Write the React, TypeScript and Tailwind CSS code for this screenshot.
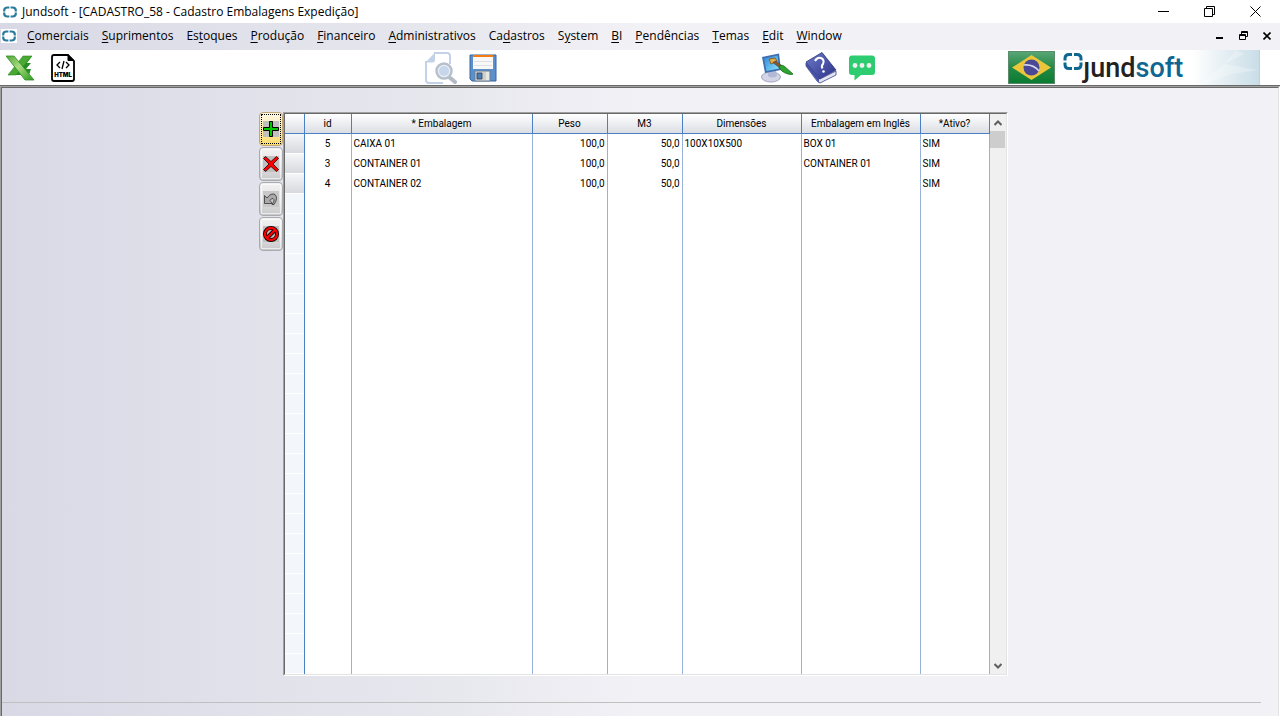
import React from "react";

type MenuEntry = { before: string; key: string; after: string };

const menus: MenuEntry[] = [
  { before: "", key: "C", after: "omerciais" },
  { before: "", key: "S", after: "uprimentos" },
  { before: "Es", key: "t", after: "oques" },
  { before: "", key: "P", after: "rodução" },
  { before: "", key: "F", after: "inanceiro" },
  { before: "", key: "A", after: "dministrativos" },
  { before: "Ca", key: "d", after: "astros" },
  { before: "S", key: "y", after: "stem" },
  { before: "", key: "B", after: "I" },
  { before: "", key: "P", after: "endências" },
  { before: "", key: "T", after: "emas" },
  { before: "", key: "E", after: "dit" },
  { before: "", key: "W", after: "indow" },
];

const columns = [
  { title: "id", width: "w-[47px]", align: "text-center" },
  { title: "* Embalagem", width: "w-[181px]", align: "text-left" },
  { title: "Peso", width: "w-[75px]", align: "text-right" },
  { title: "M3", width: "w-[75px]", align: "text-right" },
  { title: "Dimensões", width: "w-[119px]", align: "text-left" },
  { title: "Embalagem em Inglês", width: "w-[119px]", align: "text-left" },
  { title: "*Ativo?", width: "w-[69px]", align: "text-left" },
];

const rows = [
  ["5", "CAIXA 01", "100,0", "50,0", "100X10X500", "BOX 01", "SIM"],
  ["3", "CONTAINER 01", "100,0", "50,0", "", "CONTAINER 01", "SIM"],
  ["4", "CONTAINER 02", "100,0", "50,0", "", "", "SIM"],
];

const emptyRows = Array.from({ length: 24 }, (_, i) => i);

const AppMark: React.FC = () => (
  <svg width="16" height="14" viewBox="0 0 16 14" fill="none" stroke="#2a7a9e" strokeWidth="2.2">
    <path d="M7.400 2.500H5.500Q2.200 2.500 2.200 5.500V6.400M8.600 2.500H10.500Q13.800 2.500 13.800 5.500V6.400M2.200 7.600V8.500Q2.200 11.500 5.500 11.500H7.400M13.800 7.600V8.500Q13.800 11.500 10.500 11.500H8.600" />
  </svg>
);

const ExcelIcon: React.FC = () => (
  <svg width="28" height="26" viewBox="0 0 28 26">
    <defs>
      <linearGradient id="xl" x1="0" y1="0" x2="1" y2="1">
        <stop offset="0" stopColor="#4fa53a" />
        <stop offset="0.45" stopColor="#a9dc80" />
        <stop offset="1" stopColor="#2a9a1c" />
      </linearGradient>
    </defs>
    <path d="M18 1H26L21 8H25L20 14H25L23 20H2L12 10Z" fill="#2a8c26" />
    <path d="M17 1H26L10 20H2Z" fill="#4aa834" stroke="#2c8a24" strokeWidth="0.6" />
    <path d="M0 1H8L28 25H19Z" fill="url(#xl)" stroke="#2f8f24" strokeWidth="0.8" />
  </svg>
);

const HtmlIcon: React.FC = () => (
  <svg width="24" height="28" viewBox="0 0 24 28" fill="none" stroke="#000">
    <path d="M3 1H17L23 7V25Q23 27 21 27H3Q1 27 1 25V3Q1 1 3 1Z" strokeWidth="1.8" />
    <path d="M17 1V6.500H23Z" fill="#000" strokeWidth="1" />
    <path d="M9 8L6 11L9 14M15 8L18 11L15 14M13 7L11 15" strokeWidth="1.3" />
    <text
      x="12"
      y="23"
      textAnchor="middle"
      fill="#000"
      stroke="none"
      fontSize="6"
      fontWeight="900"
      fontFamily="Inter, sans-serif"
    >
      HTML
    </text>
  </svg>
);

const PreviewIcon: React.FC = () => (
  <svg width="32" height="32" viewBox="0 0 32 32" fill="none">
    <path d="M9 1H22Q25 1 25 4V12M1 9V28Q1 31 4 31H18" stroke="#c3d2e6" strokeWidth="2" />
    <path d="M10 0.500V8Q10 10.500 8 10.500H0.500Z" fill="#c3d2e6" />
    <path d="M24 25L30 30" stroke="#b2bac4" strokeWidth="4" strokeLinecap="round" />
    <circle cx="19" cy="19" r="7.500" fill="#e6edf6" stroke="#b7bfca" strokeWidth="2.400" />
    <circle cx="19" cy="19" r="5" fill="#c7d6ea" />
  </svg>
);

const SaveIcon: React.FC = () => (
  <svg width="28" height="28" viewBox="0 0 28 28">
    <path d="M1 1H27V27H3L1 25Z" fill="#5a90cc" stroke="#3765a0" />
    <path d="M4 1H24V15H4Z" fill="#f8f8f8" />
    <path d="M4 1H24V3H4Z" fill="#f57c12" />
    <path d="M5 7.500H23M5 11.500H23" stroke="#e0e0e0" />
    <path d="M6 17H21V27H6Z" fill="#cfd0cb" stroke="#6d7f93" strokeWidth="0.8" />
    <path d="M8 19H13V25H8Z" fill="#4b7eb9" stroke="#30405a" strokeWidth="0.8" />
    <path d="M17 18H20V26H17Z" fill="#e9e9e4" />
  </svg>
);

const ThemeIcon: React.FC = () => (
  <svg width="32" height="30" viewBox="0 0 32 30">
    <defs>
      <linearGradient id="scr" x1="0" y1="0" x2="1" y2="1">
        <stop offset="0" stopColor="#2f86d8" />
        <stop offset="1" stopColor="#8be3fb" />
      </linearGradient>
    </defs>
    <ellipse cx="10" cy="24" rx="9.500" ry="5" fill="#d3d5e6" stroke="#8f92b0" strokeWidth="0.8" />
    <path d="M7 18L15 17L16 23Q11 26 7 23Z" fill="#b3b8d4" />
    <path d="M1 4L18 0.500L20 17L4 20Z" fill="#3f6fae" />
    <path d="M3 5.500L16.500 2.500L18 15.500L5.500 18Z" fill="url(#scr)" />
    <path d="M8 6L14 5L16 8L10 11Z" fill="#e0ad4a" stroke="#7c4f13" strokeWidth="0.8" />
    <path d="M12 9.500L15 8L21 13L19 15Z" fill="#8a5a2a" stroke="#444" strokeWidth="0.7" />
    <path d="M18 14Q19 11 23 13L32 21Q31 22 27 21Q20 19 18 14Z" fill="#2fa32f" stroke="#14691a" strokeWidth="0.8" />
  </svg>
);

const BookIcon: React.FC = () => (
  <svg width="32" height="32" viewBox="0 0 32 32">
    <defs>
      <linearGradient id="bk" x1="0" y1="0" x2="1" y2="1">
        <stop offset="0" stopColor="#6d7bc6" />
        <stop offset="1" stopColor="#2b318a" />
      </linearGradient>
    </defs>
    <path d="M1 11L15 27L31 19V23L15 31L12 29L1 14Z" fill="#e4e6f2" stroke="#4b5297" strokeWidth="0.9" />
    <path d="M1 10L17 0.500L31 18L14 27Z" fill="url(#bk)" stroke="#2d3482" strokeWidth="0.8" />
    <path d="M1 10L14 27V31L1 14Z" fill="#4450a6" />
    <path d="M10 9Q12 5 16 6Q20 8 18 12Q16 14 17.500 16.500" fill="none" stroke="#fff" strokeWidth="2" />
    <circle cx="18.500" cy="19.500" r="1.300" fill="#fff" />
  </svg>
);

const ChatIcon: React.FC = () => (
  <svg width="26" height="26" viewBox="0 0 26 26">
    <path d="M3 0.500H23Q26 0.500 26 3.500V17Q26 20 23 20H12L5.500 25.500V20H3Q0 20 0 17V3.500Q0 0.500 3 0.500Z" fill="#2ecc71" />
    <g fill="#f0f0f0">
      <circle cx="6" cy="10.500" r="2.400" />
      <circle cx="13" cy="10.500" r="2.400" />
      <circle cx="20" cy="10.500" r="2.400" />
    </g>
  </svg>
);

const BrazilFlag: React.FC = () => (
  <svg width="47" height="33" viewBox="0 0 47 33">
    <defs>
      <linearGradient id="br" x1="0" y1="0" x2="0" y2="1">
        <stop offset="0" stopColor="#5aa676" />
        <stop offset="0.5" stopColor="#238a45" />
        <stop offset="1" stopColor="#0b7a30" />
      </linearGradient>
    </defs>
    <rect x="0.500" y="0.500" width="46" height="32" fill="url(#br)" stroke="#5c8a6c" />
    <path d="M4 16.500L23.500 4L43 16.500L23.500 29Z" fill="#ecc63a" />
    <circle cx="23.500" cy="16.500" r="8" fill="#4b4897" />
    <path d="M16 14Q25 13 31 20" fill="none" stroke="#d7d9e8" strokeWidth="1.500" />
  </svg>
);

const LogoMark: React.FC = () => (
  <svg width="20" height="19" viewBox="0 0 20 19" fill="none" stroke="#0f6690" strokeWidth="3">
    <path d="M9 2.500H6Q2 2.500 2 6.500V8.500M11 2.500H14Q18 2.500 18 6.500V8.500M2 10.500V12.500Q2 16.500 6 16.500H9M18 10.500V12.500Q18 16.500 14 16.500H11" />
  </svg>
);

const PlusIcon: React.FC = () => (
  <svg width="16" height="16" viewBox="0 0 16 16" className="shrink-0 bg-[#c0c0c0]">
    <path d="M6.500 0.500H9.500V6.500H15.500V9.500H9.500V15.500H6.500V9.500H0.500V6.500H6.500Z" fill="#00c800" stroke="#000" />
  </svg>
);

const DeleteIcon: React.FC = () => (
  <svg width="16" height="16" viewBox="0 0 16 16" className="shrink-0 bg-[#c0c0c0]">
    <path
      d="M2.500 0.500L8 5.500L13.500 0.500L15.500 2.500L10 8L15.500 13.500L13.500 15.500L8 10.500L2.500 15.500L0.500 13.500L6 8L0.500 2.500Z"
      fill="#f00"
      stroke="#200"
      strokeWidth="0.8"
    />
  </svg>
);

const UndoIcon: React.FC = () => (
  <svg width="16" height="16" viewBox="0 0 16 16" className="shrink-0 bg-[#c9c9c9]">
    <path
      d="M1.500 4.500L4 7Q8 1.500 12 3.500Q15.500 7 11 13.500L9 13.500Q12.500 9 10 7.500Q8.500 7 7 9.500L9.500 12.500H1.500Z"
      fill="#aaa"
      stroke="#444"
      strokeWidth="0.9"
    />
  </svg>
);

const CancelIcon: React.FC = () => (
  <svg width="16" height="16" viewBox="0 0 16 16" fill="none" className="shrink-0 bg-[#c0c0c0]">
    <circle cx="8" cy="8" r="6" stroke="#000" strokeWidth="4" />
    <path d="M4 12L12 4" stroke="#000" strokeWidth="4" />
    <circle cx="8" cy="8" r="6" stroke="#f00" strokeWidth="2.400" />
    <path d="M4 12L12 4" stroke="#f00" strokeWidth="2.400" />
  </svg>
);

const tools = [
  { label: "Inserir", icon: <PlusIcon />, active: true },
  { label: "Excluir", icon: <DeleteIcon />, active: false },
  { label: "Desfazer", icon: <UndoIcon />, active: false },
  { label: "Cancelar", icon: <CancelIcon />, active: false },
];

const TitleBar: React.FC = () => (
  <header className="flex h-[23px] items-center bg-white px-0.5">
    <AppMark />
    <h1 className="flex-1 pl-1 text-xs">Jundsoft - [CADASTRO_58 - Cadastro Embalagens Expedição]</h1>
    <button aria-label="Minimizar" className="flex h-5 w-[46px] items-center justify-center">
      <svg width="11" height="11" stroke="#000">
        <path d="M0 5.500H11" />
      </svg>
    </button>
    <button aria-label="Restaurar" className="flex h-5 w-[46px] items-center justify-center">
      <svg width="11" height="11" fill="none" stroke="#000">
        <path d="M0.500 2.500H8.500V10.500H0.500ZM2.500 2.500V0.500H10.500V8.500H8.500" />
      </svg>
    </button>
    <button aria-label="Fechar" className="flex h-5 w-[46px] items-center justify-center">
      <svg width="11" height="11" stroke="#000">
        <path d="M0.500 0.500L10.500 10.500M10.500 0.500L0.500 10.500" />
      </svg>
    </button>
  </header>
);

const MenuBar: React.FC = () => (
  <nav className="flex h-[27px] items-center bg-linear-to-r from-[#d9d9e6] via-[#e7e8ee] via-35% to-[#f2f1f6] to-50% px-px pb-0.5">
    <span className="bg-white">
      <AppMark />
    </span>
    <div className="flex flex-1 gap-[13px] pl-2.5 text-xs">
      {menus.map((m) => (
        <button key={m.before + m.key + m.after}>
          {m.before}
          <span className="underline underline-offset-2">{m.key}</span>
          {m.after}
        </button>
      ))}
    </div>
    <button aria-label="Minimizar janela" className="flex h-5 w-6 items-center justify-center">
      <svg width="8" height="9" stroke="#000" strokeWidth="2">
        <path d="M1 7H8" />
      </svg>
    </button>
    <button aria-label="Restaurar janela" className="flex h-5 w-6 items-center justify-center">
      <svg width="9" height="9" fill="none" stroke="#000">
        <path d="M0.500 3.500H6.500V8.500H0.500ZM0 4.500H7M2.500 3V0.500H8.500V5.500H7M2 1.500H9" />
      </svg>
    </button>
    <button aria-label="Fechar janela" className="flex h-5 w-6 items-center justify-center">
      <svg width="8" height="8" stroke="#000" strokeWidth="1.600">
        <path d="M0.500 0.500L7.500 7.500M7.500 0.500L0.500 7.500" />
      </svg>
    </button>
  </nav>
);

const Toolbar: React.FC = () => (
  <div className="grid h-9 grid-cols-[425fr_336fr_247fr_272px] grid-rows-[35px] items-center border-b border-[#696969] bg-white">
    <div className="flex items-center gap-[17px] pl-1.5">
      <button aria-label="Exportar Excel">
        <ExcelIcon />
      </button>
      <button aria-label="Exportar HTML">
        <HtmlIcon />
      </button>
    </div>
    <div className="flex items-center gap-3">
      <button aria-label="Visualizar">
        <PreviewIcon />
      </button>
      <button aria-label="Salvar">
        <SaveIcon />
      </button>
    </div>
    <div className="flex items-center gap-3">
      <button aria-label="Temas">
        <ThemeIcon />
      </button>
      <button aria-label="Ajuda">
        <BookIcon />
      </button>
      <button aria-label="Chat">
        <ChatIcon />
      </button>
    </div>
    <div className="flex h-full items-center">
      <button aria-label="Português">
        <BrazilFlag />
      </button>
      <div className="flex h-full flex-1 pl-2">
        <div className="pt-0.5">
          <LogoMark />
        </div>
        <p className="font-[Roboto,sans-serif] text-[27px] leading-9 font-medium text-[#222]">
          ȷund<span className="text-[#0f6690]">soft</span>
        </p>
      </div>
      <svg width="68" height="35" viewBox="0 0 68 35" className="mr-5 shrink-0">
        <defs>
          <linearGradient id="fade">
            <stop offset="0" stopColor="#fff" />
            <stop offset="1" stopColor="#c8dde7" />
          </linearGradient>
        </defs>
        <rect width="68" height="35" fill="url(#fade)" />
        <path d="M8 35L32 14L66 20L40 24ZM32 14L44 0L52 4Z" fill="#fff" opacity="0.25" />
        <path d="M67.500 0V35" stroke="#c9ced2" />
      </svg>
    </div>
  </div>
);

const PackagingTable: React.FC = () => (
  <div className="border border-t-[#a0a0a0] border-r-white border-b-white border-l-[#a0a0a0]">
    <div className="flex border border-t-[#696969] border-r-[#e3e3e3] border-b-[#e3e3e3] border-l-[#696969] bg-white">
      <table className="table-fixed border-separate border-spacing-0 font-[Roboto,'Liberation_Sans',sans-serif] text-[10px] leading-4">
        <thead>
          <tr className="h-5 bg-linear-to-b from-white to-[#d9dce1]">
            <th className="w-5 border-r border-b border-[#4a80c4] p-0" />
            {columns.map((c) => (
              <th key={c.title} className={`${c.width} border-r border-b border-[#4a80c4] p-0 text-center font-normal`}>
                {c.title}
              </th>
            ))}
          </tr>
        </thead>
        <tbody>
          {rows.map((row) => (
            <tr key={row[0]} className="h-5">
              <td className="border-r border-[#4a80c4] bg-[linear-gradient(#f4f5f7,#d6d9de_19px,#fff_19px)] p-0" />
              {row.map((cell, i) => (
                <td key={columns[i].title} className={`${columns[i].align} border-r border-[#98b1d8] px-0.5 py-0`}>
                  {cell}
                </td>
              ))}
            </tr>
          ))}
          {emptyRows.map((n) => (
            <tr key={n} className="h-5">
              <td className="border-r border-[#4a80c4] bg-[linear-gradient(#f3f7fc_19px,#fff_19px)] p-0" />
              {columns.map((c) => (
                <td key={c.title} className="border-r border-[#98b1d8] p-0" />
              ))}
            </tr>
          ))}
        </tbody>
      </table>
      {/* Scrollbar */}
      <div className="flex w-4 flex-col items-center bg-[#f0f0f0]">
        <button aria-label="Rolar para cima" className="flex h-[17px] w-4 items-center justify-center">
          <svg width="8" height="6" fill="none" stroke="#606060" strokeWidth="2">
            <path d="M0.500 5L4 1.500L7.500 5" />
          </svg>
        </button>
        <div className="h-[17px] w-[15px] bg-[#cdcdcd]" />
        <button aria-label="Rolar para baixo" className="mt-auto flex h-[17px] w-4 items-center justify-center">
          <svg width="8" height="6" fill="none" stroke="#606060" strokeWidth="2">
            <path d="M0.500 1L4 4.500L7.500 1" />
          </svg>
        </button>
      </div>
    </div>
  </div>
);

const App: React.FC = () => {
  return (
    <div className="flex min-h-screen flex-col font-['Open_Sans',sans-serif] text-black">
      <TitleBar />
      <MenuBar />
      <Toolbar />
      <div className="flex flex-1 flex-col border-t border-r border-l border-t-[#a0a0a0] border-r-white border-l-[#a0a0a0]">
        <main className="flex flex-1 flex-col border-t border-r border-l border-t-[#696969] border-r-[#e3e3e3] border-l-[#696969] bg-linear-to-r from-[#d9d9e6] via-[#e7e8ee] via-35% to-[#f2f1f6] to-50% pt-6 pb-[13px]">
          <div className="flex justify-center pr-3.5">
            <div className="flex flex-col gap-px">
              {tools.map((t) => (
                <button
                  key={t.label}
                  aria-label={t.label}
                  className={`flex h-[34px] w-6 items-center justify-center rounded-sm border p-px ${
                    t.active
                      ? "border-[#c2a878] bg-linear-to-b from-[#fdf8e4] to-[#fbdc6a]"
                      : "border-[#a9a9b0] bg-linear-to-b from-[#f2f2f2] via-[#e4e4e4] to-[#c9c9cc]"
                  }`}
                >
                  <span
                    className={`flex h-full w-full items-center justify-center ${
                      t.active ? "border border-dotted border-black" : "border border-white/60"
                    }`}
                  >
                    {t.icon}
                  </span>
                </button>
              ))}
            </div>
            <PackagingTable />
          </div>
          <hr className="mt-auto mr-[17px] border-[#c0c0c0]" />
        </main>
      </div>
    </div>
  );
};

export default App;
